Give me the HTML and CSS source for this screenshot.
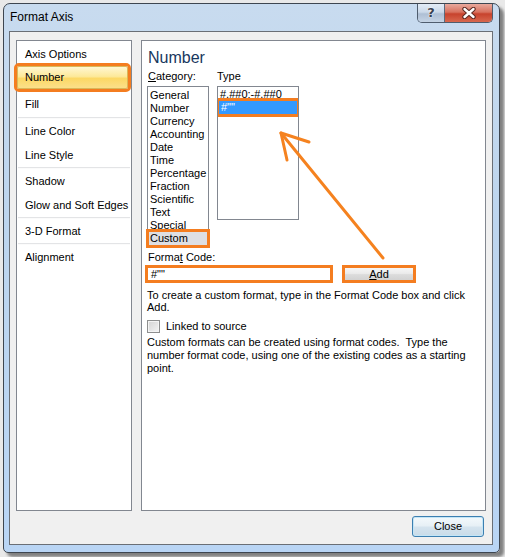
FILE: index.html
```html
<!DOCTYPE html>
<html lang="en">
<head>
<meta charset="utf-8">
<title>Format Axis</title>
<link rel="stylesheet" href="styles.css">
</head>
<body>
<div class="stage">
  <div class="window">
    <div class="titlebar">
      <span class="title">Format Axis</span>
      <div class="caption-btns">
        <span class="cbtn cap-help">?</span>
        <span class="cbtn cap-close">
          <svg width="16" height="12" viewBox="0 0 16 12">
            <path d="M3.5 2 L12.5 10 M12.5 2 L3.5 10" stroke="#5a2a22" stroke-width="4.4" stroke-linecap="round" fill="none"/>
            <path d="M3.5 2 L12.5 10 M12.5 2 L3.5 10" stroke="#ffffff" stroke-width="2.4" stroke-linecap="round" fill="none"/>
          </svg>
        </span>
      </div>
    </div>
    <div class="client">
      <div class="panels">
        <nav class="nav">
          <div class="nav-item">Axis Options</div>
          <div class="nav-item selected">Number</div>
          <div class="nav-item">Fill</div>
          <div class="nav-sep wide"></div>
          <div class="nav-item">Line Color</div>
          <div class="nav-item">Line Style</div>
          <div class="nav-sep"></div>
          <div class="nav-item">Shadow</div>
          <div class="nav-item">Glow and Soft Edges</div>
          <div class="nav-sep"></div>
          <div class="nav-item">3-D Format</div>
          <div class="nav-sep"></div>
          <div class="nav-item">Alignment</div>
        </nav>
        <section class="content">
          <h2 class="heading">Number</h2>
          <div class="lists">
            <div class="col cat-col">
              <div class="label"><u>C</u>ategory:</div>
              <div class="listbox cat-list">
                <div class="li">General</div>
                <div class="li">Number</div>
                <div class="li">Currency</div>
                <div class="li">Accounting</div>
                <div class="li">Date</div>
                <div class="li">Time</div>
                <div class="li">Percentage</div>
                <div class="li">Fraction</div>
                <div class="li">Scientific</div>
                <div class="li">Text</div>
                <div class="li">Special</div>
                <div class="li sel-gray">Custom</div>
              </div>
            </div>
            <div class="col type-col">
              <div class="label">Type</div>
              <div class="listbox type-list">
                <div class="li">#,##0;-#,##0</div>
                <div class="li sel-blue">#""</div>
              </div>
            </div>
          </div>
          <div class="label fc-label">Forma<u>t</u> Code:</div>
          <div class="fc-row">
            <div class="fc-input">#""</div>
            <div class="add-btn"><u>A</u>dd</div>
          </div>
          <p class="help-text">To create a custom format, type in the Format Code box and click Add.</p>
          <div class="check-row">
            <span class="checkbox"></span>
            <span class="check-label">Linked to source</span>
          </div>
          <p class="desc">Custom formats can be created using format codes.&nbsp; Type the number format code, using one of the existing codes as a starting point.</p>
        </section>
      </div>
      <div class="footer">
        <div class="btn">Close</div>
      </div>
    </div>
  </div>
  <svg class="annot" width="505" height="557" viewBox="0 0 505 557">
    <g stroke="#f5821f" stroke-width="3" stroke-linecap="round" stroke-linejoin="round" fill="none">
      <path d="M383 258 L281 133"/>
      <path d="M309 142 L281 133 L287 160"/>
    </g>
  </svg>
</div>
</body>
</html>
```

FILE: styles.css
```css
* { box-sizing: border-box; }

html, body {
  margin: 0;
  padding: 0;
}

body {
  background: #e9e9e9;
  font-family: "Liberation Sans", Arial, sans-serif;
  font-size: 11px;
  color: #000;
}

.stage {
  position: relative;
  width: 505px;
  height: 557px;
  padding: 3px 0 0 3px;
  overflow: hidden;
}

.window {
  width: 497px;
  height: 550px;
  border: 1px solid #3e4650;
  border-radius: 7px 7px 5px 5px;
  background: linear-gradient(to bottom, #c8dbef 0%, #bdd5ee 40%, #b9d5f5 100%);
  padding: 0 6px 7px 5px;
  box-shadow: 4px 4px 3px rgba(0, 0, 0, 0.45);
  display: flex;
  flex-direction: column;
}

.titlebar {
  height: 27px;
  display: flex;
  justify-content: space-between;
  align-items: flex-start;
}

.title {
  padding-left: 1px;
  font-size: 12px;
  line-height: 26px;
  color: #000;
}

.caption-btns {
  display: flex;
  height: 19px;
  border: 1px solid #4f5d6e;
  border-top: none;
  border-radius: 0 0 5px 5px;
  overflow: hidden;
}

.cbtn {
  display: flex;
  align-items: center;
  justify-content: center;
  height: 18px;
}

.cap-help {
  width: 27px;
  border-right: 1px solid #5b6a7c;
  background: linear-gradient(to bottom, #e3ecf6 0%, #cbd9e9 45%, #aebfd4 55%, #c5d4e5 100%);
  font-family: "DejaVu Sans", sans-serif;
  font-weight: bold;
  font-size: 13px;
  line-height: 18px;
  color: #3a4250;
  text-shadow: 0 0 2px #fff, 0 0 1px #fff;
}

.cap-close {
  width: 47px;
  background: linear-gradient(to bottom, #e9a99c 0%, #d8725f 45%, #c7432d 55%, #d8684f 100%);
}

.client {
  height: 514px;
  border: 1px solid #6a6f76;
  background: #f0f0f0;
  padding: 8px 6px 7px 6px;
  display: flex;
  flex-direction: column;
}

.panels {
  height: 471px;
  display: flex;
  gap: 9px;
}

.nav {
  width: 116px;
  height: 471px;
  border: 1px solid #828790;
  background: #fff;
  padding-top: 1px;
}

.nav-item {
  height: 24px;
  line-height: 24px;
  padding-left: 8px;
  white-space: nowrap;
}

.nav-item.selected {
  height: 23px;
  line-height: 21px;
  margin: 0 3px 3px 0;
  padding-left: 7px;
  border: 1px solid #d9b85a;
  border-radius: 2px;
  background: linear-gradient(to bottom, #fff7d2 0%, #fde99a 45%, #fcd865 55%, #fbe08a 100%);
  outline: 3px solid #f47d20;
}

.nav-sep {
  height: 2px;
  margin: 0 1px;
  border-top: 1px solid #e3e4e6;
  background: #fbfbfb;
}

.nav-sep.wide {
  margin: 1px 1px 0 1px;
}

.content {
  width: 345px;
  height: 471px;
  border: 1px solid #828790;
  background: #fff;
  padding: 6px 0 0 5px;
}

.heading {
  margin: 1px 0 0 1px;
  font-size: 16px;
  font-weight: normal;
  line-height: 20px;
  color: #17375e;
}

.lists {
  margin-top: 2px;
  display: flex;
  gap: 8px;
}

.col {
  display: flex;
  flex-direction: column;
}

.label {
  line-height: 13px;
  padding-left: 1px;
  white-space: nowrap;
}

.type-col .label {
  padding-left: 0;
}

.listbox {
  margin-top: 3px;
  border: 1px solid #828790;
  background: #fff;
}

.cat-list {
  width: 62px;
  height: 160px;
  padding: 2px 1px 0 1px;
}

.li {
  height: 13px;
  line-height: 13px;
  padding-left: 1px;
  white-space: nowrap;
}

.sel-gray {
  background: #dedfe3;
  outline: 3px solid #f47d20;
  outline-offset: 0;
}

.type-list {
  width: 82px;
  height: 134px;
  padding: 1px 0 0 0;
  overflow: hidden;
}

.type-list .li {
  padding-left: 2px;
}

.sel-blue {
  background: #3399ff;
  color: #fff;
  margin: 0 1px 0 1px;
  outline: 3px solid #f47d20;
}

.type-list .sel-blue {
  padding-left: 2px;
}

.fc-label {
  margin-top: 5px;
}

.fc-row {
  margin: 1px 0 0 -2px;
  display: flex;
  gap: 9px;
}

.fc-input {
  width: 188px;
  height: 18px;
  border: 3px solid #f47d20;
  background: #fff;
  padding-left: 3px;
  line-height: 12px;
}

.add-btn {
  width: 74px;
  height: 18px;
  border: 3px solid #f47d20;
  background: linear-gradient(to bottom, #f6f6f6 0%, #ebebeb 45%, #dcdcdc 55%, #d2d2d2 100%);
  text-align: center;
  line-height: 12px;
}

.help-text {
  margin: 6px 0 0 0;
  width: 330px;
  line-height: 12px;
}

.check-row {
  margin-top: 7px;
  height: 13px;
  display: flex;
  align-items: center;
}

.checkbox {
  width: 13px;
  height: 13px;
  border: 1px solid #8e8f8f;
  background: linear-gradient(135deg, #d4d4d4 0%, #f4f4f4 100%);
  box-shadow: inset 0 0 0 1px #f4f4f4;
}

.check-label {
  margin-left: 6px;
  line-height: 13px;
}

.desc {
  margin: 3px 0 0 0;
  width: 330px;
  line-height: 13px;
}

.footer {
  margin-top: 5px;
  display: flex;
  justify-content: flex-end;
  padding-right: 2px;
}

.btn {
  width: 72px;
  height: 21px;
  border: 1px solid #3c7fb1;
  border-radius: 3px;
  background: linear-gradient(to bottom, #f4f9fc 0%, #e7f0f6 45%, #d4e3ee 55%, #c9dbe8 100%);
  box-shadow: inset 0 0 0 1px #c4e5f6;
  text-align: center;
  line-height: 19px;
}

.annot {
  position: absolute;
  left: 0;
  top: 0;
  pointer-events: none;
}
```
